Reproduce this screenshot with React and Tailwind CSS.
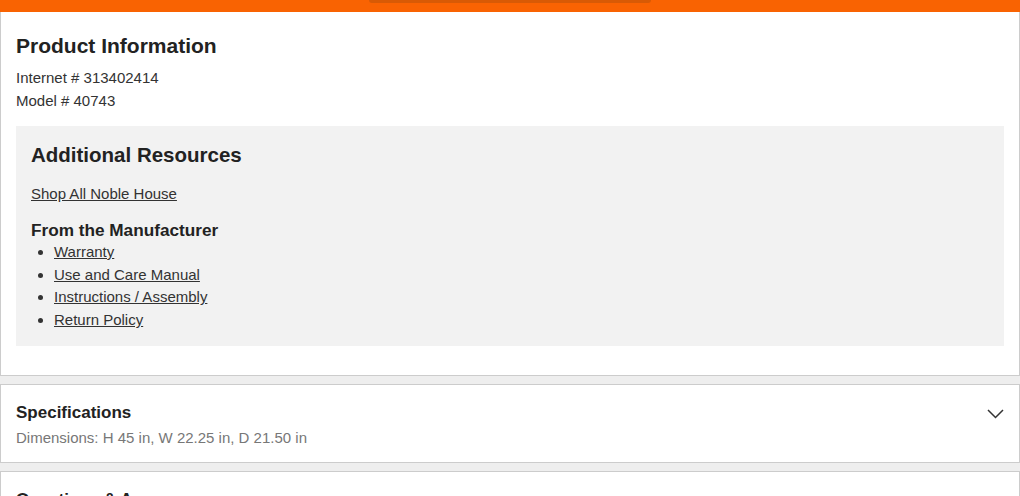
import React from "react";

// Chevron used on collapsed accordion cards
const Chevron = () => (
  <svg width="17" height="10" viewBox="0 0 17 10" fill="none" className="shrink-0">
    <path d="M1 1l7.5 7.5L16 1" stroke="#333" strokeWidth="1.5" />
  </svg>
);

const links = ["Warranty", "Use and Care Manual", "Instructions / Assembly", "Return Policy"];

const App = () => {
  return (
    <div className="min-h-[496px] bg-[#eeeeee] font-['Liberation_Sans',Arial,sans-serif] text-[#333]">
      {/* Top orange bar */}
      <div className="h-[12px] bg-[#f96302] flex justify-center">
        <div className="w-[282px] h-[3px] bg-[#d85a05] rounded-b-[3px]" />
      </div>

      {/* Product information card */}
      <div className="bg-white border border-[#cccccc] border-t-0 px-[15px] pt-[21px] pb-[29px]">
        <h2 className="text-[21px] leading-[26px] font-bold text-[#222]">Product Information</h2>
        <div className="mt-[7px] text-[15px] leading-[23px]">
          <p>Internet # 313402414</p>
          <p>Model # 40743</p>
        </div>

        <div className="mt-[14px] bg-[#f2f2f2] px-[15px] pt-[16px] pb-[14px]">
          <h3 className="text-[20.5px] leading-[26px] font-bold text-[#222]">Additional Resources</h3>
          <a href="#" className="block mt-[14px] text-[15px] leading-[23px] underline">
            Shop All Noble House
          </a>
          <h4 className="mt-[14px] text-[17.2px] leading-[22px] font-bold text-[#222]">From the Manufacturer</h4>
          <ul className="list-disc pl-[23px] text-[15px] leading-[22.7px]">
            {links.map((l) => (
              <li key={l}>
                <a href="#" className="underline">{l}</a>
              </li>
            ))}
          </ul>
        </div>
      </div>

      {/* Specifications card */}
      <div className="mt-[8px] bg-white border border-[#cccccc] px-[15px] pt-[17px] pb-[13px] flex items-start justify-between">
        <div>
          <h3 className="text-[17px] leading-[22px] font-bold text-[#222]">Specifications</h3>
          <p className="mt-[2px] text-[15px] leading-[23px] text-[#777]">
            Dimensions: H 45 in, W 22.25 in, D 21.50 in
          </p>
        </div>
        <div className="pt-[7px]">
          <Chevron />
        </div>
      </div>

      {/* Questions & Answers card */}
      <div className="mt-[8px] bg-white border border-[#cccccc] px-[15px] pt-[17px] pb-[14px] flex items-start justify-between">
        <div>
          <h3 className="text-[17px] leading-[22px] font-bold text-[#222]">Questions &amp; Answers</h3>
        </div>
        <div className="pt-[7px]">
          <Chevron />
        </div>
      </div>
    </div>
  );
};

export default App;
